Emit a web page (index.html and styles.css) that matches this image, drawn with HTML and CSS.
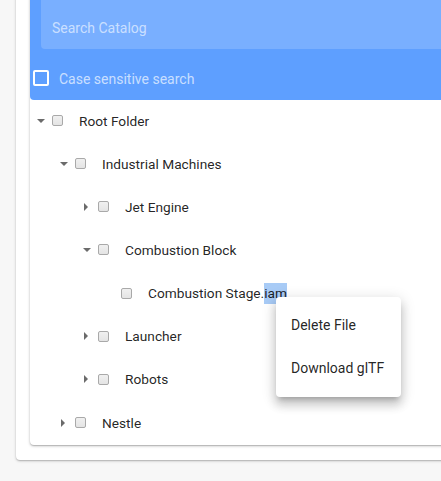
FILE: index.html
```html
<!DOCTYPE html>
<html>
<head>
<meta charset="utf-8">
<link rel="stylesheet" href="styles.css">
</head>
<body>
<div class="outer">
  <div class="inner">
    <div class="header">
      <div class="search">Search Catalog</div>
      <div class="case-row"><span class="case-box"></span><span class="case-label">Case sensitive search</span></div>
    </div>
    <div class="tree">
      <div class="row l0"><span class="tog down"></span><span class="cb"></span><span class="name">Root Folder</span></div>
      <div class="row l1"><span class="tog down"></span><span class="cb"></span><span class="name">Industrial Machines</span></div>
      <div class="row l2"><span class="tog right"></span><span class="cb"></span><span class="name">Jet Engine</span></div>
      <div class="row l2"><span class="tog down"></span><span class="cb"></span><span class="name">Combustion Block</span></div>
      <div class="row l3"><span class="tog"></span><span class="cb"></span><span class="name">Combustion Stage.<span class="sel">iam</span></span></div>
      <div class="row l2"><span class="tog right"></span><span class="cb"></span><span class="name">Launcher</span></div>
      <div class="row l2"><span class="tog right"></span><span class="cb"></span><span class="name">Robots</span></div>
      <div class="row l1"><span class="tog right"></span><span class="cb"></span><span class="name">Nestle</span></div>
    </div>
  </div>
</div>
<div class="menu">
  <div class="item">Delete File</div>
  <div class="item">Download glTF</div>
</div>
</body>
</html>
```
FILE: styles.css
```css
html, body {
  margin: 0;
  padding: 0;
  background: #f7f7f7;
  overflow: hidden;
  font-family: Roboto, "Liberation Sans", sans-serif;
}
body {
  width: 441px;
  height: 481px;
  position: relative;
}
.outer {
  margin: -30px 0 0 16px;
  width: 480px;
  background: #fff;
  border-radius: 4px;
  box-shadow: 0 1px 3px rgba(0,0,0,0.22), 0 1px 1px rgba(0,0,0,0.12);
  padding: 16px 0 15px 14px;
}
.inner {
  background: #fff;
  border-radius: 4px;
  box-shadow: 0 1px 3px rgba(0,0,0,0.25), 0 1px 1px rgba(0,0,0,0.14);
}
.header {
  background: #5e9fff;
  border-radius: 4px;
  padding: 7px 0 0 11px;
}
.search {
  height: 56px;
  box-sizing: border-box;
  padding: 14px 0 0 11px;
  display: flex;
  align-items: center;
  background: #79afff;
  border-radius: 4px;
  color: rgba(255,255,255,0.62);
  font-size: 14px;
}
.case-row {
  height: 45px;
  margin-top: 6px;
  margin-left: -8px;
  display: flex;
  align-items: center;
}
.case-box {
  width: 16px;
  height: 16px;
  box-sizing: border-box;
  border: 2px solid #fff;
  border-radius: 2px;
}
.case-label {
  margin-left: 10px;
  margin-top: 2px;
  color: rgba(255,255,255,0.68);
  font-size: 14px;
}
.tree {
  margin-top: -1px;
  padding-bottom: 1px;
}
.row {
  height: 43.15px;
  display: flex;
  align-items: center;
  font-size: 13.7px;
  color: rgba(0,0,0,0.87);
}
.l0 { padding-left: 7px; }
.l1 { padding-left: 30px; }
.l2 { padding-left: 53px; }
.l3 { padding-left: 76px; }
.tog {
  width: 15px;
  height: 10px;
  position: relative;
  flex: none;
}
.tog.down::before {
  content: "";
  position: absolute;
  left: 0;
  top: 3px;
  border-left: 4.5px solid transparent;
  border-right: 4.5px solid transparent;
  border-top: 4.5px solid #6b6b6b;
}
.tog.right::before {
  content: "";
  position: absolute;
  left: 1px;
  top: 1px;
  border-top: 4.5px solid transparent;
  border-bottom: 4.5px solid transparent;
  border-left: 4.5px solid #6b6b6b;
}
.cb {
  width: 11px;
  height: 11px;
  box-sizing: border-box;
  border: 1px solid #a9a9a9;
  background: linear-gradient(#f0f0f0, #e4e4e4);
  border-radius: 2px;
  flex: none;
}
.name {
  margin-left: 16px;
  white-space: nowrap;
}
.sel {
  background: #a8cbf6;
  padding: 2px 0 3px;
}
.menu {
  position: absolute;
  left: 276px;
  top: 297px;
  width: 125px;
  padding: 7px 0;
  background: #fff;
  border-radius: 4px;
  box-shadow: 0 5px 5px -3px rgba(0,0,0,0.2), 0 8px 10px 1px rgba(0,0,0,0.14), 0 3px 14px 2px rgba(0,0,0,0.12);
}
.item {
  height: 43px;
  line-height: 43px;
  padding-left: 15px;
  font-size: 14px;
  color: rgba(0,0,0,0.87);
}
```
